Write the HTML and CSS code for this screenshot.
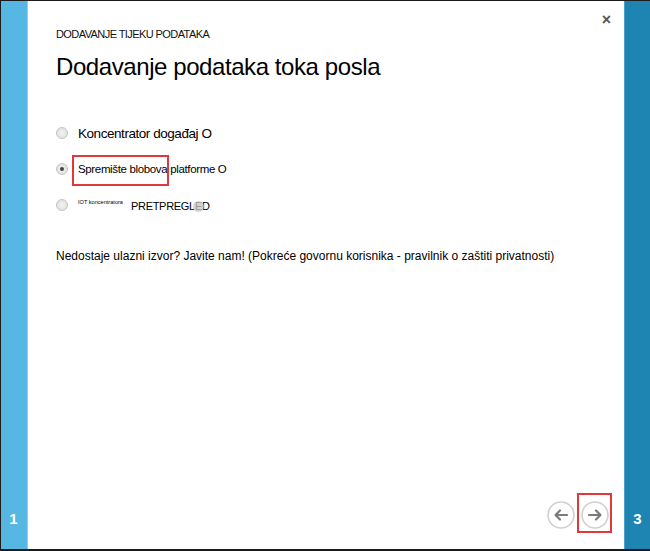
FILE: index.html
```html
<!DOCTYPE html>
<html>
<head>
<meta charset="utf-8">
<link rel="stylesheet" href="styles.css">
</head>
<body>
<div class="frame">
  <div class="side side-left"><span class="step">1</span></div>
  <div class="main">
    <div class="close">×</div>
    <div class="kicker">DODAVANJE TIJEKU PODATAKA</div>
    <h1 class="title">Dodavanje podataka toka posla</h1>
    <div class="options">
      <label class="opt opt-big"><span class="radio"></span><span>Koncentrator događaj O</span></label>
      <label class="opt"><span class="radio checked"></span><span class="hl-wrap"><span class="hl">Spremište blobova</span> platforme O</span></label>
      <label class="opt"><span class="radio"></span><span class="tiny">IOT koncentratora</span><span class="preview">PRETPREGL<span class="dot"></span>ED</span></label>
    </div>
    <p class="note">Nedostaje ulazni izvor? Javite nam! (Pokreće govornu korisnika - pravilnik o zaštiti privatnosti)</p>
    <div class="spacer"></div>
    <div class="nav">
      <span class="navbtn"><svg width="28" height="28" viewBox="0 0 28 28"><circle cx="14" cy="14" r="13" fill="#fff" stroke="#d0d0d0" stroke-width="1.6"/><path d="M20 14H8.5M13 9.5L8.5 14L13 18.5" fill="none" stroke="#7a7a7a" stroke-width="2.2" stroke-linecap="round" stroke-linejoin="round"/></svg></span>
      <span class="navbtn navbtn-hl"><svg width="28" height="28" viewBox="0 0 28 28"><circle cx="14" cy="14" r="13" fill="#fff" stroke="#d0d0d0" stroke-width="1.6"/><path d="M8 14H19.5M15 9.5L19.5 14L15 18.5" fill="none" stroke="#7a7a7a" stroke-width="2.2" stroke-linecap="round" stroke-linejoin="round"/></svg></span>
    </div>
  </div>
  <div class="side side-right"><span class="step">3</span></div>
</div>
</body>
</html>
```
FILE: styles.css
```css
html, body { margin: 0; padding: 0; }
body { background: #1b1b1b; font-family: "Liberation Sans", Arial, sans-serif; }
.frame {
  width: 650px; height: 551px; box-sizing: border-box;
  border-top: 1px solid #1b1b1b; border-left: 1px solid #1b1b1b; border-bottom: 2px solid #1b1b1b;
  display: flex; background: #fff;
}
.side { display: flex; flex-direction: column; justify-content: flex-end; }
.side-left { width: 26px; background: #55b7e2; border-right: 1px solid #8fd0ee; }
.side-right { width: 25px; background: #1e85b2; border-left: 1px solid #4aa2c8; }
.step { color: #fff; font-weight: bold; font-size: 15px; text-align: center; padding-bottom: 22px; }
.side-left .step { padding-right: 1px; }
.main { flex: 1; position: relative; padding-left: 28px; display: flex; flex-direction: column; }
.close { position: absolute; right: 13px; top: 10px; font-size: 16px; font-weight: bold; color: #555; line-height: 18px; }
.kicker { margin-top: 27px; font-size: 11px; color: #111; letter-spacing: -0.58px; line-height: 12px; }
.title { margin: 13px 0 0; font-weight: normal; font-size: 24px; line-height: 28px; color: #000; letter-spacing: -0.42px; }
.options { margin-top: 34px; display: flex; flex-direction: column; }
.opt { display: flex; align-items: center; height: 36px; font-size: 11.5px; color: #000; letter-spacing: -0.35px; }
.opt-big { font-size: 13.5px; height: 36px; letter-spacing: -0.45px; }
.radio { width: 10px; height: 10px; border-radius: 50%; border: 1px solid #c4c4c4; background: radial-gradient(circle, #f2f2f2 0, #dcdcdc 100%); margin-right: 10px; flex: none; position: relative; }
.radio.checked::after { content: ""; position: absolute; left: 3px; top: 3px; width: 4px; height: 4px; border-radius: 50%; background: #444; }
.hl-wrap { position: relative; }
.hl { position: relative; }
.hl::before { content: ""; position: absolute; left: -6px; right: -2px; top: -8px; bottom: -11px; border: 2px solid #e0383b; }
.tiny { font-size: 5.6px; align-self: flex-start; margin-top: 12px; letter-spacing: 0; margin-right: 8px; }
.preview { position: relative; margin-top: 2px; font-size: 11px; letter-spacing: -0.3px; }
.dot { display: inline-block; width: 11px; height: 11px; border-radius: 50%; background: #c8c8c8; margin: 0 -9px 0 -2px; vertical-align: -2px; opacity: 0.75; }
.note { margin: 26px 0 0; font-size: 12px; color: #000; letter-spacing: 0; }
.spacer { flex: 1; }
.nav { display: flex; justify-content: flex-end; gap: 6px; padding-right: 15px; padding-bottom: 20px; }
.navbtn { display: block; width: 28px; height: 28px; position: relative; }
.navbtn svg { display: block; }
.navbtn-hl::after { content: ""; position: absolute; left: -4px; top: -8px; width: 31px; height: 36px; border: 2px solid #e0383b; }
```
